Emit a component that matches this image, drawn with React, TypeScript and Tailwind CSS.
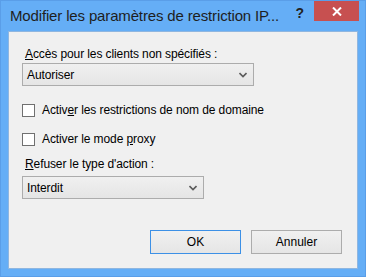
import { ReactNode } from 'react';

const font = { fontFamily: '"Segoe UI", "Liberation Sans", Arial, sans-serif' };

function Select({ value, width }: { value: string; width: string }) {
  return (
    <div
      className={`flex h-[23px] ${width} items-center justify-between border border-[#acacac] bg-gradient-to-b from-[#f0f0f0] to-[#e5e5e5] pl-[4px] pr-[6px] text-[12px] tracking-[-0.1px] text-black`}
    >
      <span>{value}</span>
      <svg width="8" height="6" viewBox="0 0 8 6">
        <path d="M0.5 1 L4 4.5 L7.5 1" fill="none" stroke="#5a5a5a" strokeWidth="1.6" />
      </svg>
    </div>
  );
}

function Checkbox({ children }: { children: ReactNode }) {
  return (
    <div className="flex h-[16px] items-center gap-[7px] pl-[13px] text-[12px] tracking-[-0.1px] text-black">
      <div className="h-[13px] w-[13px] border border-[#707070] bg-white" />
      <span>{children}</span>
    </div>
  );
}

function Button({ label, primary }: { label: string; primary?: boolean }) {
  return (
    <button
      className={`flex h-[24px] w-[91px] items-center justify-center border bg-gradient-to-b from-[#f0f0f0] to-[#e5e5e5] text-[12px] text-black ${
        primary ? 'border-[#3c90e6]' : 'border-[#acacac]'
      }`}
    >
      {label}
    </button>
  );
}

export default function App() {
  return (
    <div
      className="flex h-[277px] w-[366px] flex-col border border-[#5a9ee8] bg-[#65aef6]"
      style={font}
    >
      {/* Title bar */}
      <div className="flex h-[30px] items-start">
        <div className="pl-[9px] pt-[5px] text-[15px] leading-[20px] tracking-[-0.15px] text-[#1e1e1e]">
          Modifier les paramètres de restriction IP...
        </div>
        <div className="ml-auto mr-[6px] flex">
          <div className="pr-[10px] pt-[2px] text-[14px] font-bold text-[#222]">?</div>
          <div className="flex h-[20px] w-[45px] items-center justify-center bg-[#c75050]">
            <svg width="10" height="9" viewBox="0 0 10 9">
              <path d="M1 0.5 L9 8.5 M9 0.5 L1 8.5" stroke="white" strokeWidth="2" />
            </svg>
          </div>
        </div>
      </div>

      {/* Client area */}
      <div className="mx-[7px] mb-[7px] flex flex-1 flex-col border border-[#8fb6e0] bg-[#f0f0f0]">
        <div className="pl-[16px] pt-[14px] text-[12px] leading-[16px] tracking-[-0.1px] text-black">
          <span className="underline">A</span>ccès pour les clients non spécifiés :
        </div>
        <div className="pl-[13px] pt-[1px]">
          <Select value="Autoriser" width="w-[232px]" />
        </div>

        <div className="mt-[16px] flex flex-col gap-[13px]">
          <Checkbox>
            Activ<span className="underline">e</span>r les restrictions de nom de domaine
          </Checkbox>
          <Checkbox>
            Activer le mode <span className="underline">p</span>roxy
          </Checkbox>
        </div>

        <div className="pl-[16px] pt-[9px] text-[12px] leading-[16px] tracking-[-0.1px] text-black">
          <span className="underline">R</span>efuser le type d'action :
        </div>
        <div className="pl-[13px] pt-[4px]">
          <Select value="Interdit" width="w-[182px]" />
        </div>

        <div className="mt-auto flex justify-end gap-[10px] pb-[14px] pr-[15px]">
          <Button label="OK" primary />
          <Button label="Annuler" />
        </div>
      </div>
    </div>
  );
}
